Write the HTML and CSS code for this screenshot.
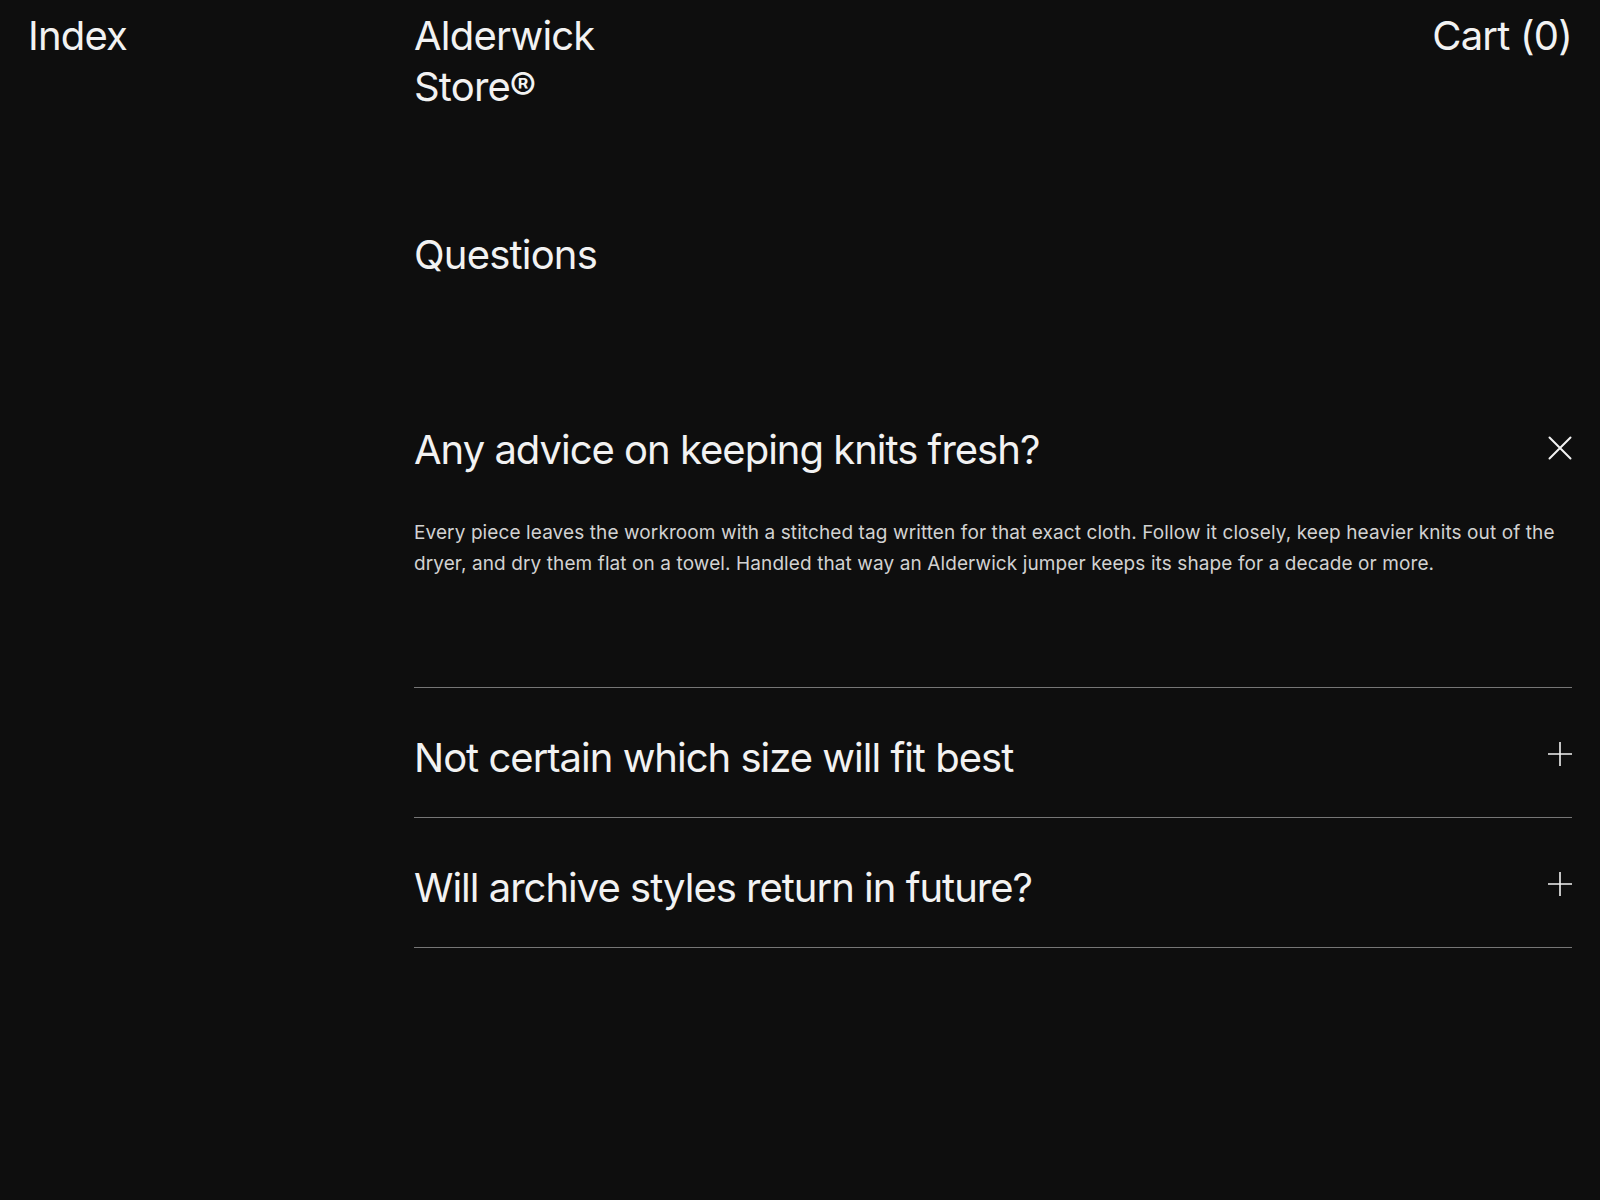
FILE: index.html
```html
<!DOCTYPE html>
<html lang="en">
<head>
<meta charset="utf-8">
<title>Alderwick Store — Questions</title>
<link rel="stylesheet" href="styles.css">
</head>
<body>
<header class="site-header">
  <a class="nav-link index-link" href="#">Index</a>
  <a class="brand" href="#">Alderwick<br>Store®</a>
  <a class="nav-link cart-link" href="#">Cart (0)</a>
</header>

<main class="page">
  <section class="faq">
    <h1 class="faq-title">Questions</h1>

    <div class="faq-list">
      <div class="faq-item is-open">
        <div class="faq-head">
          <h2 class="faq-q">Any advice on keeping knits fresh?</h2>
          <span class="faq-icon">
            <svg width="24" height="24" viewBox="0 0 24 24" fill="none" stroke="#f2f2f2" stroke-width="2" stroke-linecap="round"><path d="M1.5 1.5 L22.5 22.5 M22.5 1.5 L1.5 22.5"/></svg>
          </span>
        </div>
        <p class="faq-a">Every piece leaves the workroom with a stitched tag written for that exact cloth. Follow it closely, keep heavier knits out of the dryer, and dry them flat on a towel. Handled that way an Alderwick jumper keeps its shape for a decade or more.</p>
      </div>

      <div class="faq-item">
        <div class="faq-head">
          <h2 class="faq-q">Not certain which size will fit best</h2>
          <span class="faq-icon">
            <svg width="24" height="24" viewBox="0 0 24 24" fill="none" stroke="#f2f2f2" stroke-width="1.6"><path d="M12 0 V24 M0 12 H24"/></svg>
          </span>
        </div>
      </div>

      <div class="faq-item">
        <div class="faq-head">
          <h2 class="faq-q">Will archive styles return in future?</h2>
          <span class="faq-icon">
            <svg width="24" height="24" viewBox="0 0 24 24" fill="none" stroke="#f2f2f2" stroke-width="1.6"><path d="M12 0 V24 M0 12 H24"/></svg>
          </span>
        </div>
      </div>
    </div>
  </section>
</main>
</body>
</html>
```

FILE: styles.css
```css
* {
  box-sizing: border-box;
}

html, body {
  margin: 0;
  padding: 0;
}

body {
  background: #0e0e0e;
  color: #f2f2f2;
  font-family: Inter, "Noto Sans", "Liberation Sans", sans-serif;
  min-height: 1200px;
}

a {
  color: inherit;
  text-decoration: none;
}

.site-header {
  display: grid;
  grid-template-columns: repeat(4, 1fr);
  padding: 10px 28px 0;
  font-size: 40px;
  line-height: 51px;
  letter-spacing: -0.02em;
}

.index-link {
  grid-column: 1;
}

.brand {
  grid-column: 2;
}

.cart-link {
  grid-column: 4;
  justify-self: end;
}

.page {
  display: grid;
  grid-template-columns: repeat(4, 1fr);
  padding: 0 28px;
}

.faq {
  grid-column: 2 / 5;
}

.faq-title {
  margin: 117px 0 0;
  font-size: 40px;
  line-height: 51px;
  font-weight: 400;
  letter-spacing: -0.02em;
}

.faq-list {
  margin-top: 100px;
}

.faq-item {
  border-bottom: 1px solid #767676;
}

.faq-head {
  display: flex;
  justify-content: space-between;
  align-items: flex-start;
  padding: 40px 0 35px;
}

.faq-q {
  margin: 0;
  padding-top: 6px;
  font-size: 40px;
  line-height: 48px;
  font-weight: 400;
  letter-spacing: -0.025em;
}

.faq-icon {
  display: flex;
  align-items: center;
  justify-content: flex-end;
  height: 51px;
  width: 24px;
}

.faq-icon svg {
  display: block;
}

.faq-item.is-open .faq-icon {
  height: 56px;
}

.faq-a {
  margin: 0;
  padding: 7px 0 108px;
  font-size: 19px;
  line-height: 30.6px;
  letter-spacing: 0.1px;
  color: #d2d2d2;
}
```
